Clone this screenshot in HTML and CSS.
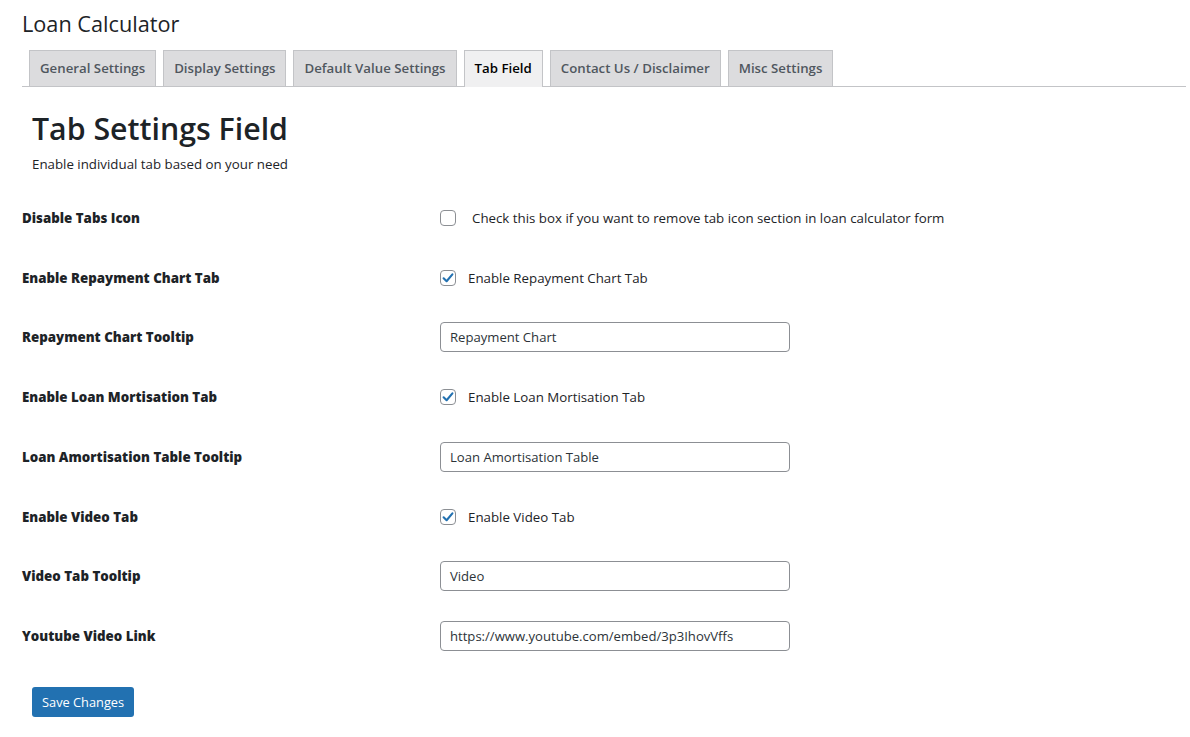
FILE: index.html
```html
<!DOCTYPE html>
<html>
<head>
<meta charset="utf-8">
<link rel="stylesheet" href="styles.css">
</head>
<body>
<div class="wrap">
  <h1 class="page-title">Loan Calculator</h1>
  <nav class="tabs">
    <span class="tab">General Settings</span>
    <span class="tab">Display Settings</span>
    <span class="tab">Default Value Settings</span>
    <span class="tab tab-active">Tab Field</span>
    <span class="tab">Contact Us / Disclaimer</span>
    <span class="tab">Misc Settings</span>
  </nav>
  <div class="section">
    <h2 class="section-title">Tab Settings Field</h2>
    <p class="section-desc">Enable individual tab based on your need</p>
  </div>
  <div class="form">
    <div class="row">
      <div class="label">Disable Tabs Icon</div>
      <div class="control">
        <span class="check"></span><span class="check-text check-text-wide">Check this box if you want to remove tab icon section in loan calculator form</span>
      </div>
    </div>
    <div class="row">
      <div class="label">Enable Repayment Chart Tab</div>
      <div class="control">
        <span class="check"><svg viewBox="0 0 16 16" width="16" height="16"><path d="M3.6 8.3 L6.6 11.2 L12.4 4.4" fill="none" stroke="#2271b1" stroke-width="2.1" stroke-linecap="round" stroke-linejoin="round"/></svg></span><span class="check-text">Enable Repayment Chart Tab</span>
      </div>
    </div>
    <div class="row">
      <div class="label">Repayment Chart Tooltip</div>
      <div class="control"><div class="input">Repayment Chart</div></div>
    </div>
    <div class="row">
      <div class="label">Enable Loan Mortisation Tab</div>
      <div class="control">
        <span class="check"><svg viewBox="0 0 16 16" width="16" height="16"><path d="M3.6 8.3 L6.6 11.2 L12.4 4.4" fill="none" stroke="#2271b1" stroke-width="2.1" stroke-linecap="round" stroke-linejoin="round"/></svg></span><span class="check-text">Enable Loan Mortisation Tab</span>
      </div>
    </div>
    <div class="row">
      <div class="label">Loan Amortisation Table Tooltip</div>
      <div class="control"><div class="input">Loan Amortisation Table</div></div>
    </div>
    <div class="row">
      <div class="label">Enable Video Tab</div>
      <div class="control">
        <span class="check"><svg viewBox="0 0 16 16" width="16" height="16"><path d="M3.6 8.3 L6.6 11.2 L12.4 4.4" fill="none" stroke="#2271b1" stroke-width="2.1" stroke-linecap="round" stroke-linejoin="round"/></svg></span><span class="check-text">Enable Video Tab</span>
      </div>
    </div>
    <div class="row">
      <div class="label">Video Tab Tooltip</div>
      <div class="control"><div class="input">Video</div></div>
    </div>
    <div class="row">
      <div class="label">Youtube Video Link</div>
      <div class="control"><div class="input">https://www.youtube.com/embed/3p3IhovVffs</div></div>
    </div>
  </div>
  <div class="actions"><span class="button">Save Changes</span></div>
</div>
</body>
</html>
```
FILE: styles.css
```css
* { box-sizing: border-box; }
html, body { margin: 0; padding: 0; background: #fff; }
body {
  font-family: "Open Sans", "Noto Sans", sans-serif;
  color: #1d2327;
  font-size: 13px;
}
.wrap { padding: 0 4px 0 22px; }
.page-title {
  margin: 0;
  padding-top: 9px;
  font-size: 21.7px;
  font-weight: 400;
  line-height: 30px;
  color: #1d2327;
}
.tabs {
  display: flex;
  margin-top: 11px;
  padding-left: 7px;
  border-bottom: 1px solid #c3c4c7;
  gap: 7px;
}
.tab {
  display: block;
  height: 36px;
  padding: 0 10px;
  line-height: 34px;
  font-size: 13.25px;
  font-weight: 600;
  color: #50575e;
  background: #dcdcde;
  border: 1px solid #c3c4c7;
  border-bottom: none;
  white-space: nowrap;
}
.tab-active {
  background: #f0f0f1;
  color: #000;
  margin-bottom: -1px;
  height: 37px;
}
.section { padding-left: 10px; }
.section-title {
  margin: 0;
  padding-top: 21px;
  font-size: 30.3px;
  font-weight: 600;
  line-height: 42px;
  color: #1d2327;
}
.section-desc {
  margin: 0;
  padding-top: 4px;
  font-size: 13.3px;
  line-height: 20px;
}
.form { padding-top: 14px; }
.row {
  display: flex;
  align-items: center;
  height: 59.75px;
}
.label {
  width: 418px;
  flex: none;
  font-weight: 800;
  font-size: 13.3px;
  color: #1d2327;
}
.control { display: flex; align-items: center; }
.check {
  width: 16px;
  height: 16px;
  border: 1px solid #8c8f94;
  border-radius: 4px;
  display: flex;
  align-items: center;
  justify-content: center;
  flex: none;
  background: #fff;
}
.check svg { display: block; margin: -1px; }
.check-text { margin-left: 12px; font-size: 13.3px; }
.check-text-wide { margin-left: 16px; }
.input {
  width: 350px;
  height: 30px;
  border: 1px solid #8c8f94;
  border-radius: 4px;
  padding: 0 9px;
  line-height: 28px;
  font-size: 13.1px;
  color: #2c3338;
}
.actions { padding: 21px 0 0 10px; }
.button {
  display: inline-block;
  height: 30px;
  padding: 0 10px;
  line-height: 30px;
  background: #2271b1;
  color: #fff;
  border-radius: 3px;
  font-size: 12.8px;
}
```
